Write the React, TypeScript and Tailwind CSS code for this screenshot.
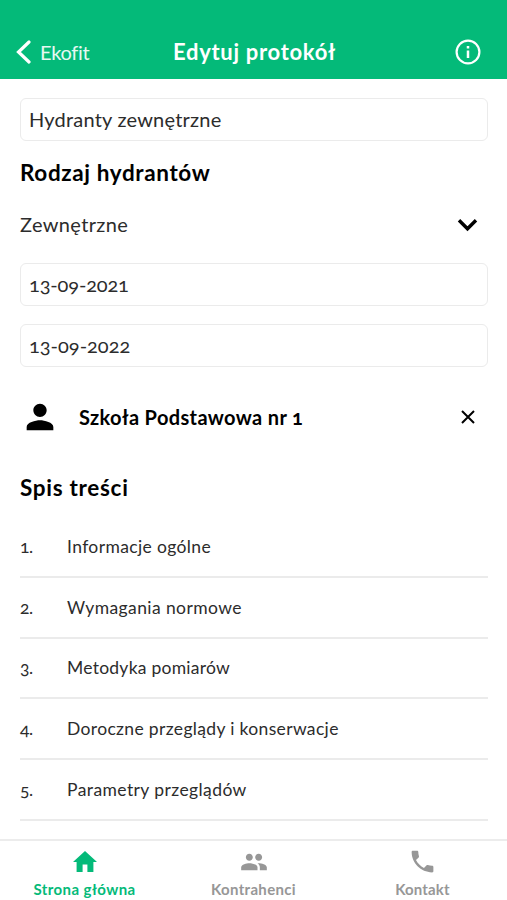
import type { ReactNode } from "react";
import { MdPeople, MdPerson, MdPhone } from "react-icons/md";

const sections = [
  { title: "Informacje ogólne", tracking: "tracking-[0.37px]" },
  { title: "Wymagania normowe", tracking: "tracking-[0.4px]" },
  { title: "Metodyka pomiarów", tracking: "tracking-[0.25px]" },
  { title: "Doroczne przeglądy i konserwacje", tracking: "tracking-[0.34px]" },
  { title: "Parametry przeglądów", tracking: "tracking-[0.41px]" },
];

function Header() {
  return (
    <header className="flex h-[79px] shrink-0 items-end bg-[#04ba79] px-4 text-white">
      <div className="flex h-[54px] w-full items-center">
        <button className="flex w-[157px] items-center gap-[9px]">
          <svg width="15" height="24" viewBox="0 0 15 24" fill="none" stroke="currentColor" strokeWidth="3.2" strokeLinecap="round">
            <path d="M13 2 2.5 12 13 22" />
          </svg>
          <span className="text-[20px] leading-6 tracking-[-0.3px] text-white/90">Ekofit</span>
        </button>
        <h1 className="text-[22px] leading-7 font-bold tracking-[0.7px] whitespace-nowrap">Edytuj protokół</h1>
        <button className="ml-auto mr-[10px]">
          <svg width="26" height="26" viewBox="0 0 26 26" fill="none" stroke="currentColor" strokeWidth="2.2">
            <circle cx="13" cy="13" r="11.4" />
            <path d="M13 11.5v7.5" strokeWidth="2.5" />
            <path d="M13 7v2.5" strokeWidth="2.5" />
          </svg>
        </button>
      </div>
    </header>
  );
}

function Field({ children }: { children: ReactNode }) {
  return (
    <div className="flex h-[43px] items-center rounded-md border border-[#ebebeb] px-2 pb-[2px] text-[20px] leading-6 text-[#2c2c2c]">
      {children}
    </div>
  );
}

function HomeIcon() {
  return (
    <svg className="my-[3px]" width="24" height="21" viewBox="2 3 20 17" preserveAspectRatio="none" fill="currentColor">
      <path d="M10 20v-6h4v6h5v-8h3L12 3 2 12h3v8z" />
    </svg>
  );
}

function BottomNav() {
  return (
    <nav className="grid h-[61px] shrink-0 grid-cols-3 border-t-2 border-[#ececec] bg-white text-[15px] font-bold text-[#979797]">
      <a className="flex flex-col items-center pt-[7px] text-[#04ba79]">
        <HomeIcon />
        <span className="mt-[4px] leading-5 tracking-[0.42px]">Strona główna</span>
      </a>
      <a className="flex flex-col items-center pt-[7px]">
        <MdPeople className="size-[28px]" />
        <span className="mt-[3px] leading-5 tracking-[0.33px]">Kontrahenci</span>
      </a>
      <a className="flex flex-col items-center pt-[6px]">
        <MdPhone className="size-[29px]" />
        <span className="mt-[3px] leading-5 tracking-[0.15px]">Kontakt</span>
      </a>
    </nav>
  );
}

export default function App() {
  return (
    <div className="flex h-[900px] w-full flex-col overflow-hidden bg-white font-['Lato','Open_Sans',sans-serif] [font-variant-numeric:oldstyle-nums]">
      <Header />

      <main className="min-h-0 flex-1 overflow-hidden pt-[19px] pr-[19px] pl-5">
        <Field>
          <span className="tracking-[0.22px]">Hydranty zewnętrzne</span>
        </Field>
        <h2 className="mt-[18px] text-[22.5px] leading-7 font-bold tracking-[0.63px] text-black">Rodzaj hydrantów</h2>

        <div className="mt-[12px] flex h-[50px] items-center justify-between pr-[10px]">
          <span className="text-[20px] leading-6 tracking-[0.35px] text-[#2c2c2c]">Zewnętrzne</span>
          <svg className="mt-[2px]" width="21" height="14" viewBox="0 0 21 14" fill="none" stroke="#000" strokeWidth="3.4">
            <path d="m2 2.2 8.5 8.6L19 2.2" />
          </svg>
        </div>

        <div className="mt-[14px] flex flex-col gap-[18px]">
          <Field>
            <span className="tracking-[-0.15px]">13-09-2021</span>
          </Field>
          <Field>13-09-2022</Field>
        </div>

        <div className="mt-[20px] flex h-[60px] items-center pr-[13px]">
          <MdPerson className="size-10 text-black" />
          <span className="ml-[19px] text-[20px] leading-6 font-bold tracking-[0.36px] text-black">Szkoła Podstawowa nr 1</span>
          <svg className="ml-auto" width="14" height="14" viewBox="0 0 14 14" fill="none" stroke="#000" strokeWidth="2">
            <path d="m1 1 12 12M13 1 1 13" />
          </svg>
        </div>

        <h2 className="mt-[27px] text-[22.5px] leading-7 font-bold tracking-[0.7px] text-black">Spis treści</h2>

        <ol className="mt-[15px]">
          {sections.map((section, index) => (
            <li
              key={section.title}
              className="flex h-[60.75px] items-center border-b-2 border-[#ebebeb] pt-px text-[17.5px] leading-6 text-[#2c2c2c]"
            >
              <span className="w-[47px] tracking-[-0.4px]">{index + 1}.</span>
              <span className={section.tracking}>{section.title}</span>
            </li>
          ))}
        </ol>
      </main>

      <BottomNav />
    </div>
  );
}
